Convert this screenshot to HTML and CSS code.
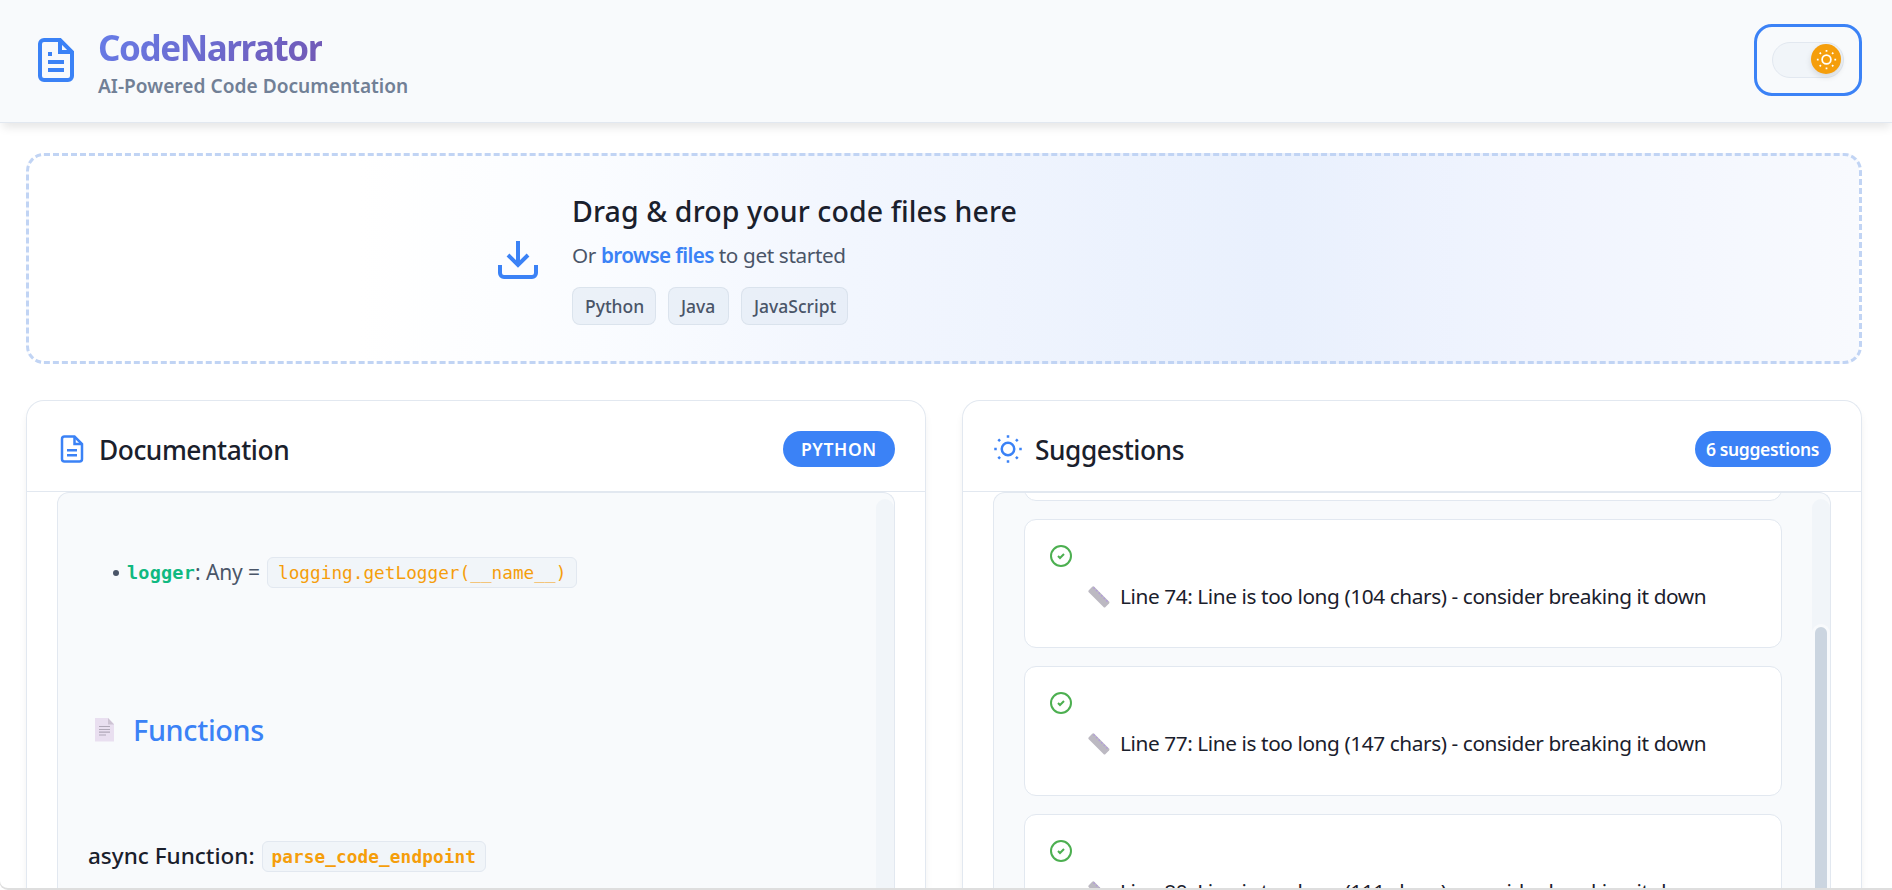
FILE: index.html
```html
<!DOCTYPE html>
<html lang="en">
<head>
<meta charset="utf-8">
<title>CodeNarrator</title>
<link rel="stylesheet" href="styles.css">
</head>
<body>
<header class="topbar">
  <svg class="logo" viewBox="0 0 24 24"><path d="M14 2H6a2 2 0 0 0-2 2v16a2 2 0 0 0 2 2h12a2 2 0 0 0 2-2V8z"/><path d="M14 2v6h6M16 13H8M16 17H8M10 9H8"/></svg>
  <div class="brand">
    <h1 class="brand-name"><span>CodeNarrator</span></h1>
    <p class="brand-tag">AI-Powered Code Documentation</p>
  </div>
  <button class="theme" aria-label="Toggle theme">
    <span class="track"><span class="knob"><svg viewBox="0 0 24 24"><circle cx="12" cy="12" r="5"/><path d="M12 1v2M12 21v2M4.22 4.22l1.42 1.42M18.36 18.36l1.42 1.42M1 12h2M21 12h2M4.22 19.78l1.42-1.42M18.36 5.64l1.42-1.42"/></svg></span></span>
  </button>
</header>
<main class="main">
  <section class="drop">
    <svg class="drop-icon" viewBox="0 0 24 24"><path d="M21 15v4a2 2 0 0 1-2 2H5a2 2 0 0 1-2-2v-4M7 10l5 5 5-5M12 15V3"/></svg>
    <div class="drop-text">
      <h2 class="drop-title">Drag &amp; drop your code files here</h2>
      <p class="drop-sub">Or <a class="browse">browse files</a> to get started</p>
      <div class="tags"><span class="tag tag-py">Python</span><span class="tag tag-java">Java</span><span class="tag tag-js">JavaScript</span></div>
    </div>
  </section>
  <div class="panels">
    <section class="panel">
      <div class="panel-head">
        <svg class="panel-icon" viewBox="0 0 24 24"><path d="M14 2H6a2 2 0 0 0-2 2v16a2 2 0 0 0 2 2h12a2 2 0 0 0 2-2V8z"/><path d="M14 2v6h6M16 13H8M16 17H8"/></svg>
        <h2 class="panel-title">Documentation</h2>
        <span class="pill pill-lang">PYTHON</span>
      </div>
      <div class="scroller">
        <div class="doc">
          <p class="item"><span class="dot"></span><code class="name">logger</code><span class="type">: Any =</span><code class="chip chip-value">logging.getLogger(__name__)</code></p>
          <h3 class="section"><svg class="page" viewBox="0 0 20 24"><path class="page-sheet" d="M0 0h13l6 6v17.500H0z"/><path class="page-fold" d="M13 0l6 6.500h-6z"/><path class="page-lines" d="M4 8.500h11M4 11.500h11M4 14.200h11M4 17h7"/></svg>Functions</h3>
          <h4 class="fn">async Function:<code class="chip chip-fn">parse_code_endpoint</code></h4>
        </div>
        <div class="rail"></div>
      </div>
    </section>
    <section class="panel">
      <div class="panel-head">
        <svg class="panel-icon" viewBox="0 0 24 24"><circle cx="12" cy="12" r="5"/><path d="M12 1v2M12 21v2M4.22 4.22l1.42 1.42M18.36 18.36l1.42 1.42M1 12h2M21 12h2M4.22 19.78l1.42-1.42M18.36 5.64l1.42-1.42"/></svg>
        <h2 class="panel-title">Suggestions</h2>
        <span class="pill pill-count">6 suggestions</span>
      </div>
      <div class="scroller">
        <div class="list">
          <article class="card card-first"></article>
          <article class="card">
            <svg class="check" viewBox="0 0 24 24"><circle cx="12" cy="12" r="10"/><path d="M9 12l2 2 4-4"/></svg>
            <p class="msg"><svg class="ruler" viewBox="0 0 22 22"><path class="ruler-body" d="M6 .500L21 15.500Q22 16.500 21 17.500L17.500 21Q16.500 22 15.500 21L.500 6Q0 5 .800 4.200L4.200 .800Q5 0 6 .500z"/><path class="ruler-marks" d="M5.500 1.500L20.500 16.500"/></svg>Line 74: Line is too long (104 chars) - consider breaking it down</p>
          </article>
          <article class="card">
            <svg class="check" viewBox="0 0 24 24"><circle cx="12" cy="12" r="10"/><path d="M9 12l2 2 4-4"/></svg>
            <p class="msg"><svg class="ruler" viewBox="0 0 22 22"><path class="ruler-body" d="M6 .500L21 15.500Q22 16.500 21 17.500L17.500 21Q16.500 22 15.500 21L.500 6Q0 5 .800 4.200L4.200 .800Q5 0 6 .500z"/><path class="ruler-marks" d="M5.500 1.500L20.500 16.500"/></svg>Line 77: Line is too long (147 chars) - consider breaking it down</p>
          </article>
          <article class="card">
            <svg class="check" viewBox="0 0 24 24"><circle cx="12" cy="12" r="10"/><path d="M9 12l2 2 4-4"/></svg>
            <p class="msg"><svg class="ruler" viewBox="0 0 22 22"><path class="ruler-body" d="M6 .500L21 15.500Q22 16.500 21 17.500L17.500 21Q16.500 22 15.500 21L.500 6Q0 5 .800 4.200L4.200 .800Q5 0 6 .500z"/><path class="ruler-marks" d="M5.500 1.500L20.500 16.500"/></svg>Line 80: Line is too long (111 chars) - consider breaking it down</p>
          </article>
        </div>
        <div class="rail"><div class="thumb"></div></div>
      </div>
    </section>
  </div>
</main>
<div class="frame"></div>
</body>
</html>
```
FILE: styles.css
```css
* { box-sizing: border-box; }
html, body { margin: 0; height: 100%; overflow: hidden; }
body {
  background: #fff;
  color: #1a202c;
  font-family: "Noto Sans", "Open Sans", sans-serif;
}
h1, h2, h3, h4, p { margin: 0; font-weight: 600; }
svg { display: block; flex: none; fill: none; stroke: #3b82f6; stroke-width: 2; }
span, a, code, p { white-space: nowrap; }

.topbar {
  position: relative;
  display: flex;
  align-items: center;
  height: 123px;
  padding: 0 30px 2px 32px;
  background: #f8fafc;
  border-bottom: 1px solid #e2e8f0;
  box-shadow: 0 6px 9px -1.500px rgba(0, 0, 0, .1);
}
.logo { width: 48px; height: 48px; }
.brand { margin-left: 18px; padding-top: 3px; }
.brand-name {
  font-size: 35px;
  line-height: 48px;
  font-weight: 700;
  letter-spacing: -1.420px;
}
.brand-name span {
  background: linear-gradient(135deg, #667eea, #764ba2 130%);
  -webkit-background-clip: text;
  background-clip: text;
  color: transparent;
}
.brand-tag { font-size: 19.100px; line-height: 28px; font-weight: 600; letter-spacing: .030px; color: #718096; }
.theme {
  margin-left: auto;
  width: 108px;
  height: 72px;
  padding: 15px;
  border: 3px solid #3b82f6;
  border-radius: 18px;
  background: transparent;
}
.track {
  display: flex;
  justify-content: flex-end;
  width: 72px;
  height: 36px;
  padding: 1px 2px;
  border: 1px solid #e2e8f0;
  border-radius: 18px;
  background: #f1f5f9;
}
.knob {
  display: grid;
  place-items: center;
  width: 30px;
  height: 30px;
  border-radius: 50%;
  background: #f59e0b;
  box-shadow: 0 3px 6px rgba(0, 0, 0, .12);
}
.knob svg { width: 21px; height: 21px; stroke: #fff; }

.main { height: calc(100% - 123px); padding: 30px 30px 0 26px; overflow: hidden; }
.drop {
  display: flex;
  height: 211px;
  padding: 37px 0 0 465px;
  border: 3px dashed #c1d4f4;
  border-radius: 18px;
  background: linear-gradient(90deg, #fff 0%, #fff 18%, #fafcff 31%, #f2f6fe 45%, #e9f0fd 68%, #f0f4fe 82%, #f8fafe 100%);
}
.drop-icon { width: 48px; height: 48px; margin-top: 42px; }
.drop-text { margin-left: 30px; }
.drop-title { font-size: 28.500px; line-height: 36px; font-weight: 500; letter-spacing: .105px; }
.drop-sub { margin-top: 11px; font-size: 20.700px; line-height: 30px; font-weight: 400; letter-spacing: -.360px; color: #4a5568; }
.browse { color: #3b82f6; font-weight: 600; letter-spacing: -.640px; }
.tags { display: flex; gap: 12px; margin-top: 17px; }
.tag {
  height: 38px;
  padding-left: 12px;
  border: 1px solid rgba(203, 213, 225, .5);
  border-radius: 8px;
  background: rgba(225, 234, 244, .6);
  color: #4a5568;
  font-size: 17.500px;
  line-height: 36px;
  font-weight: 500;
}
.tag-py { width: 84px; }
.tag-java { width: 61px; }
.tag-js { width: 107px; }

.panels { display: grid; grid-template-columns: 900px 900px; gap: 36px; margin-top: 36px; }
.panel {
  height: 490px;
  border: 1px solid #e2e8f0;
  border-bottom: 0;
  border-radius: 18px 18px 0 0;
  background: #fff;
  box-shadow: 0 6px 9px -1px rgba(0, 0, 0, .07);
}
.panel-head {
  display: flex;
  align-items: center;
  height: 91px;
  padding: 30px 30px 24px;
  border-bottom: 1px solid #e2e8f0;
}
.panel-icon { width: 30px; height: 30px; }
.panel-title { margin-left: 12px; padding-top: 2px; font-size: 26.300px; line-height: 36px; font-weight: 500; letter-spacing: -.450px; }
.pill {
  height: 36px;
  margin-left: auto;
  border-radius: 18px;
  background: #3b82f6;
  color: #fff;
  font-size: 17.500px;
  line-height: 37px;
  font-weight: 600;
}
.pill-lang { width: 112px; padding-left: 18px; letter-spacing: .600px; }
.pill-count { width: 136px; padding-left: 11px; letter-spacing: -.370px; }
.scroller {
  display: flex;
  justify-content: space-between;
  height: 398px;
  margin: 0 30px;
  border: 1px solid #e2e8f0;
  border-bottom: 0;
  border-radius: 12px 12px 0 0;
  background: #f8fafc;
  overflow: hidden;
}
.rail { width: 18px; margin-top: 6px; padding-top: 125px; border-radius: 9px 9px 0 0; background: #f1f5f9; }
.thumb { height: 100%; border: 3px solid #f8fafc; border-bottom: 0; border-radius: 9px 9px 0 0; background: #cbd5e0; }

.doc { padding: 64px 0 0 30px; }
.item { display: flex; align-items: center; height: 31px; padding-left: 25px; font-size: 21px; font-weight: 400; color: #4a5568; }
.dot { width: 6px; height: 6px; margin-right: 8px; border-radius: 50%; background: #4a5568; }
code { font-family: "DejaVu Sans Mono", monospace; }
.name { color: #10b981; font-size: 18.500px; font-weight: 700; letter-spacing: .200px; }
.type { margin-right: 7px; padding-bottom: 2px; letter-spacing: -.100px; }
.chip {
  height: 31px;
  padding-left: 10px;
  border: 1px solid #e2e8f0;
  border-radius: 6px;
  background: #f1f5f9;
  color: #f59e0b;
  font-size: 17.700px;
  line-height: 30px;
}
.chip-value { width: 310px; letter-spacing: .030px; }
.section { display: flex; align-items: center; margin-top: 119px; padding-left: 7px; height: 44px; font-size: 28.800px; font-weight: 500; letter-spacing: -.320px; color: #3b82f6; }
.page { width: 20px; height: 24px; margin: 2px 18px 0 0; stroke: none; }
.page-sheet { fill: #e9dff0; }
.page-fold { fill: #cdc3d3; }
.page-lines { stroke: #b0a8b8; stroke-width: 1.200; }
.fn { display: flex; align-items: center; height: 31px; margin-top: 89px; font-size: 22.500px; line-height: 28px; font-weight: 500; }
.chip-fn { width: 224px; margin: 2px 0 0 7px; padding-left: 9px; font-weight: 700; letter-spacing: .110px; }

.list { padding-left: 30px; }
.card {
  width: 758px;
  height: 129.400px;
  margin-bottom: 18px;
  padding: 24px;
  border: 1px solid #e2e8f0;
  border-radius: 12px;
  background: #fff;
}
.card-first { margin-top: -121.400px; }
.check { width: 24px; height: 24px; stroke: #4caf50; }
.msg { display: flex; align-items: center; height: 34px; margin: 11px 0 0 39px; font-size: 20.800px; font-weight: 400; letter-spacing: -.410px; }
.ruler { width: 22px; height: 22px; margin: 2px 10px 0 0; stroke: none; }
.ruler-body { fill: #bcb9c2; }
.ruler-marks { stroke: #b39ddb; stroke-width: 1.500; stroke-dasharray: 1.800 1.800; }

/* Window edge drawn over the page bottom */
.frame {
  position: fixed;
  left: -1px;
  right: -1px;
  bottom: 0;
  height: 40px;
  border: 2px solid #dedede;
  border-top: 0;
  border-left-width: 1px;
  border-right-width: 1px;
  border-radius: 0 0 0 9px;
}
```
